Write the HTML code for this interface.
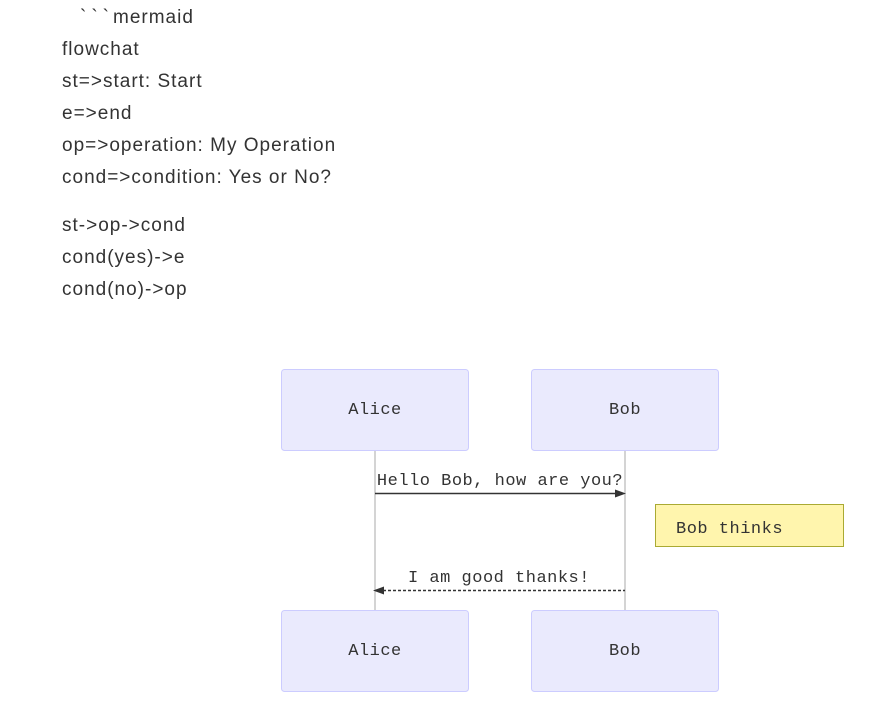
<!DOCTYPE html>
<html>
<head>
<meta charset="utf-8">
<title>page</title>
</head>
<body style="margin:0;background:#ffffff;">
<div style="position:relative;width:887px;height:712px;font-family:'Liberation Sans',sans-serif;color:#333333;letter-spacing:1px;">
<div style="position:absolute;left:80px;top:2px;font-size:19px;line-height:32px;letter-spacing:5px;">&#96;&#96;&#96;</div>
<div style="position:absolute;left:113px;top:2px;font-size:19px;line-height:32px;">mermaid</div>
<div style="position:absolute;left:62px;top:34px;font-size:19px;line-height:32px;">flowchat</div>
<div style="position:absolute;left:62px;top:66px;font-size:19px;line-height:32px;">st=&gt;start: Start</div>
<div style="position:absolute;left:62px;top:98px;font-size:19px;line-height:32px;">e=&gt;end</div>
<div style="position:absolute;left:62px;top:130px;font-size:19px;line-height:32px;">op=&gt;operation: My Operation</div>
<div style="position:absolute;left:62px;top:162px;font-size:19px;line-height:32px;">cond=&gt;condition: Yes or No?</div>
<div style="position:absolute;left:62px;top:210px;font-size:19px;line-height:32px;">st-&gt;op-&gt;cond</div>
<div style="position:absolute;left:62px;top:242px;font-size:19px;line-height:32px;">cond(yes)-&gt;e</div>
<div style="position:absolute;left:62px;top:274px;font-size:19px;line-height:32px;">cond(no)-&gt;op</div>
<svg xmlns="http://www.w3.org/2000/svg" width="887" height="712" style="position:absolute;left:0;top:0;" font-family="'Liberation Mono', monospace" font-size="17" letter-spacing="0.5">
<line x1="375" y1="450" x2="375" y2="611" stroke="#aaaaaa"/>
<line x1="625" y1="450" x2="625" y2="611" stroke="#aaaaaa"/>
<rect x="281.5" y="369.5" width="187" height="81" rx="3" fill="#eaeafd" stroke="#ccccff"/>
<rect x="531.5" y="369.5" width="187" height="81" rx="3" fill="#eaeafd" stroke="#ccccff"/>
<rect x="281.5" y="610.5" width="187" height="81" rx="3" fill="#eaeafd" stroke="#ccccff"/>
<rect x="531.5" y="610.5" width="187" height="81" rx="3" fill="#eaeafd" stroke="#ccccff"/>
<text x="375" y="414" text-anchor="middle" fill="#333333">Alice</text>
<text x="625" y="414" text-anchor="middle" fill="#333333">Bob</text>
<text x="375" y="655" text-anchor="middle" fill="#333333">Alice</text>
<text x="625" y="655" text-anchor="middle" fill="#333333">Bob</text>
<text x="500" y="485" text-anchor="middle" fill="#333333">Hello Bob, how are you?</text>
<text x="499" y="582" text-anchor="middle" fill="#333333">I am good thanks!</text>
<rect x="655.5" y="504.5" width="188" height="42" fill="#fff5ad" stroke="#aaaa33"/>
<text x="676" y="533" fill="#333333">Bob thinks</text>
<line x1="375" y1="493.5" x2="617" y2="493.5" stroke="#333333" stroke-width="1.5"/>
<path d="M626 493.5 L615 489.5 L615 497.5 Z" fill="#333333"/>
<line x1="383" y1="590.5" x2="625" y2="590.5" stroke="#333333" stroke-width="1.5" stroke-dasharray="3,2"/>
<path d="M373 590.5 L384 586.5 L384 594.5 Z" fill="#333333"/>
</svg>
</div>
</body>
</html>
